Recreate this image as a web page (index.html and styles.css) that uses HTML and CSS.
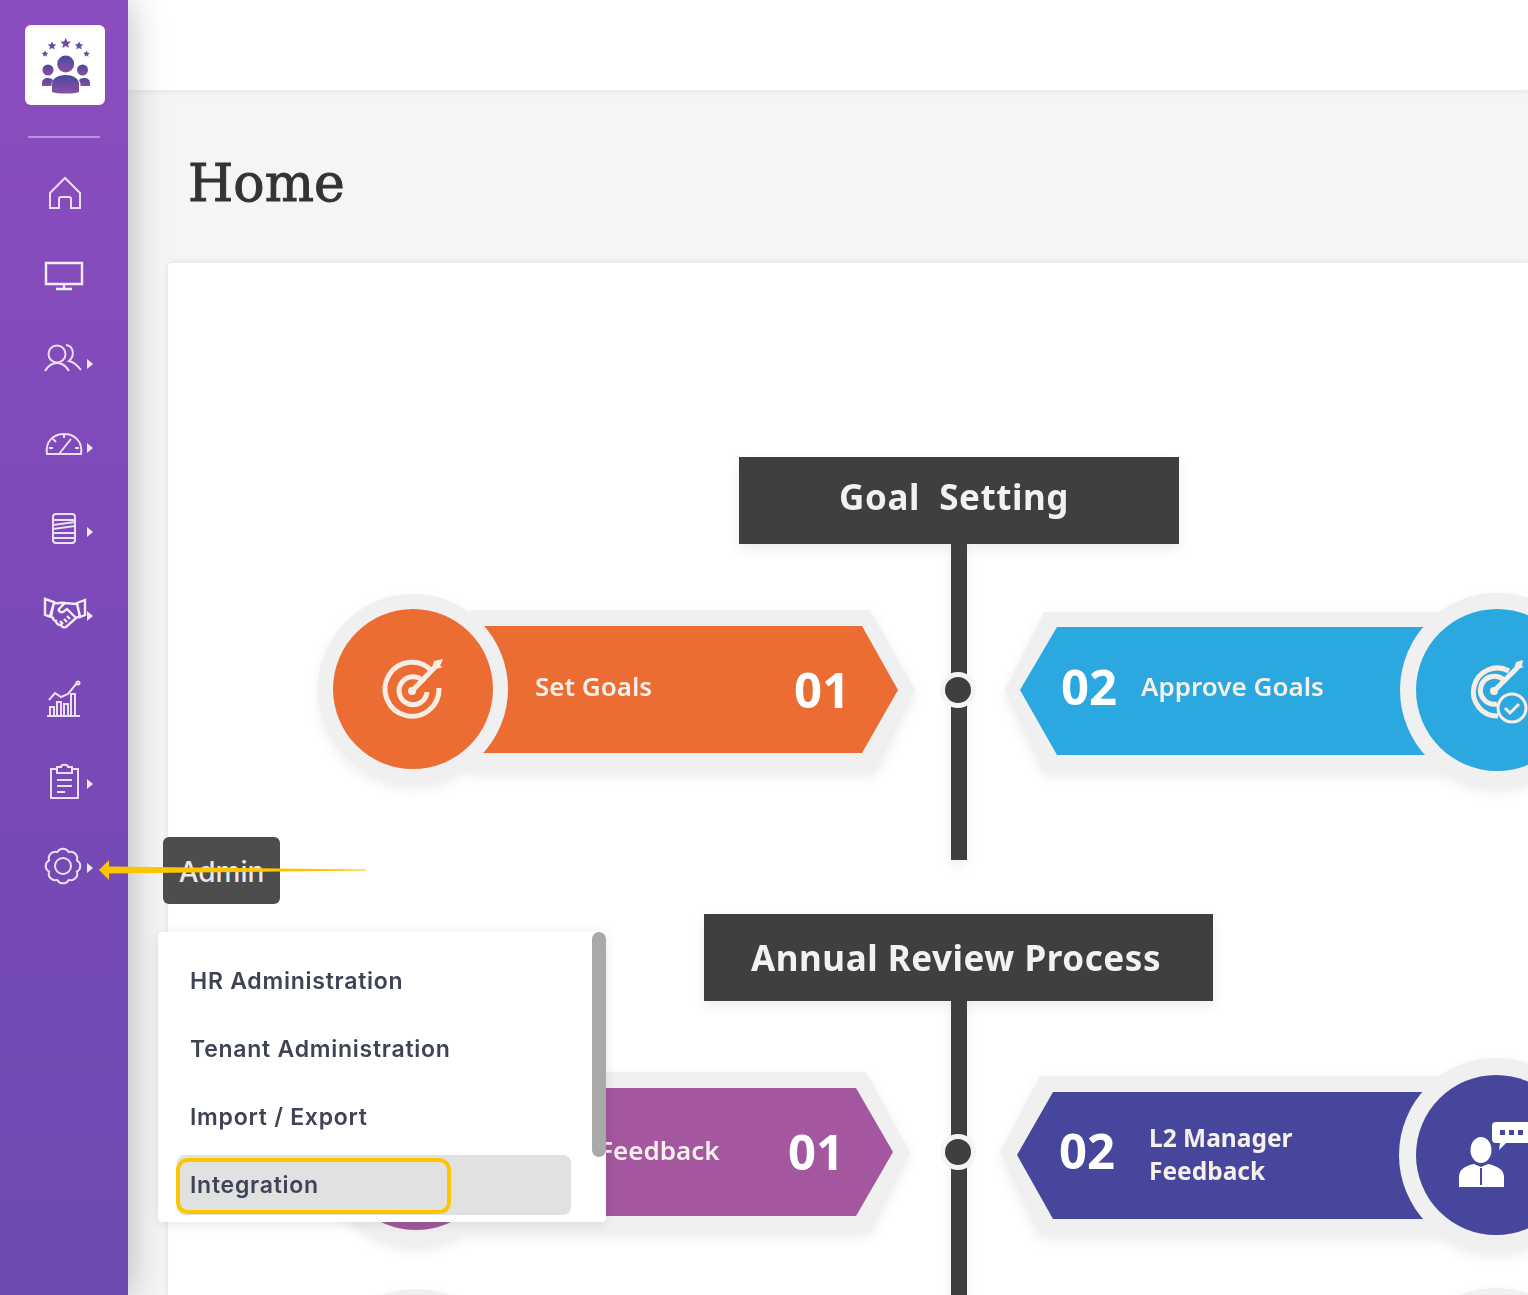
FILE: index.html
```html
<!DOCTYPE html>
<html lang="en">
<head>
  <meta charset="UTF-8" />
  <meta name="viewport" content="width=device-width, initial-scale=1.0" />
  <title>Home</title>
  <link rel="stylesheet" href="styles.css">
</head>
<body>
  <div class="app">
    <aside class="sidebar">
      <div class="logo">
        <svg viewBox="0 0 80 80" width="80" height="80">
          <defs>
            <linearGradient id="logoFill" x1="0" y1="0" x2="0" y2="1">
              <stop offset="0" stop-color="#4a489f" />
              <stop offset="1" stop-color="#8d4f9f" />
            </linearGradient>
          </defs>
          <g fill="url(#logoFill)">
            <path d="M40.7 13l1.6 3.4 3.7.4-2.8 2.5.8 3.7-3.3-1.9-3.3 1.9.8-3.7-2.8-2.5 3.700-.4z" />
            <path d="M27 16.500l1.300 2.800 3 .3-2.300 2 .7 3-2.700-1.500-2.700 1.500.7-3-2.300-2 3-.3z" />
            <path d="M54 16.500l1.300 2.800 3 .3-2.300 2 .7 3-2.700-1.500-2.700 1.500.7-3-2.300-2 3-.3z" />
            <path d="M20 25.500l1 2.100 2.300.3-1.700 1.500.5 2.300-2.100-1.200-2.100 1.200.5-2.300-1.700-1.500 2.300-.3z" />
            <path d="M61.500 25.500l1 2.100 2.300.3-1.700 1.500.5 2.300-2.100-1.200-2.100 1.200.5-2.300-1.700-1.500 2.300-.3z" />
            <circle cx="40.7" cy="39" r="8.5" />
            <circle cx="23" cy="45" r="5.5" />
            <circle cx="57.5" cy="45" r="5.5" />
            <path d="M17 58c0-3 2-5 6-5 2.500 0 4 .8 5 2l-1.500 3.500V61H17z" />
            <path d="M65 58c0-3-2-5-6-5-2.500 0-4 .8-5 2l1.500 3.500V61H65z" />
            <path d="M27 67v-8c0-5 5-9 13.500-9S54 54 54 59v8c-3 1-8 1.500-13.500 1.500S30 68 27 67z" />
          </g>
        </svg>
      </div>
      <div class="divider"></div>
      <nav class="nav">
        <a class="nav-item">
          <svg class="nav-icon" viewBox="0 0 40 40"><path d="M6 35V20L21 5l15 15v15h-9V26a2 2 0 0 0-2-2h-8a2 2 0 0 0-2 2v9z" /></svg>
        </a>
        <a class="nav-item">
          <svg class="nav-icon nav-icon-bold" viewBox="0 0 40 40"><path d="M2 6h36v21H2zM20 27v4M12 32h16" /></svg>
        </a>
        <a class="nav-item">
          <svg class="nav-icon" viewBox="0 0 40 40"><circle cx="13" cy="13" r="8.500" /><path d="M1 30c3-5 6-8 12-8s9 3 12 8M22 4c8 1 9 11 3 16 5 1 9 5 12 9" /></svg>
          <span class="caret"></span>
        </a>
        <a class="nav-item">
          <svg class="nav-icon" viewBox="0 0 40 40"><path d="M3 29C1 16 10 9 20 9s19 7 17 20zM15 29l12-15M20 9v4M9 14l3 3M5 23h4M35 23h-4" /></svg>
          <span class="caret"></span>
        </a>
        <a class="nav-item">
          <svg class="nav-icon" viewBox="0 0 40 40"><rect x="9" y="5" width="22" height="29" rx="3" /><path d="M9 11h22M9 16l22-3M9 20l22-3M9 24h22M9 29h22" /></svg>
          <span class="caret"></span>
        </a>
        <a class="nav-item">
          <svg class="nav-icon nav-icon-bold" viewBox="0 0 40 40"><path d="M1 6l9 3-3 15-6-2zM41 7l-8 3 3 14 5-2zM10 10c4 1 7-1 11 0l12 1 3 12-4 2-10 9c-2 1-4 0-5-2-3 0-5-2-5-4-2 0-3-2-3-3l-3-2zM21 10l-6 6c-1 2 2 4 4 3l4-3 9 9M26 26l-3-3M23 29l-3-3M19 31l-3-3" /></svg>
          <span class="caret"></span>
        </a>
        <a class="nav-item">
          <svg class="nav-icon" viewBox="0 0 40 40"><path d="M3 39h33M6 39v-9h4v9M13 39V25h4v14M20 39V27h4v12M27 39V17h4v22M5 23l6-7 6 4 7-3 9-11" /><circle cx="34" cy="6" r="1.500" /></svg>
        </a>
        <a class="nav-item">
          <svg class="nav-icon" viewBox="0 0 40 40"><path d="M13 8H7v29h27V8h-6M13 6h4c0-3 7-3 7 0h4v6H13zM13 19h15M13 25h15M13 31h8" /></svg>
          <span class="caret"></span>
        </a>
        <a class="nav-item">
          <svg class="nav-icon" viewBox="0 0 40 40"><path d="M32.900 15.300A6.500 6.500 0 0 1 32.900 26.700A6.500 6.500 0 0 1 24.700 34.900A6.500 6.500 0 0 1 13.300 34.900A6.500 6.500 0 0 1 5.100 26.700A6.500 6.500 0 0 1 5.100 15.300A6.500 6.500 0 0 1 13.300 7.100A6.500 6.500 0 0 1 24.700 7.100A6.500 6.500 0 0 1 32.900 15.300z" /><circle cx="19" cy="21" r="8" /></svg>
          <span class="caret"></span>
        </a>
      </nav>
    </aside>

    <main class="main">
      <header class="topbar"></header>
      <div class="content">
        <h1 class="page-title">Home</h1>
        <section class="card">
          <!-- viewBox uses page coordinates so the nodes are easy to place -->
          <svg class="diagram" viewBox="168 263 1360 1032" width="1360" height="1032">
            <g class="halo">
              <path d="M470 610H870L915 690L875 772H470Z" />
              <circle cx="413" cy="689" r="95" />
              <path d="M1510 612H1044L1005 690L1044 772H1510Z" />
              <circle cx="1497" cy="690" r="97" />
              <path d="M470 1072H866L910 1152L870 1232H470Z" />
              <circle cx="416" cy="1150" r="96" />
              <path d="M1510 1076H1040L1000 1152L1040 1235H1510Z" />
              <circle cx="1496" cy="1155" r="97" />
              <circle cx="416" cy="1385" r="96" />
              <circle cx="1496" cy="1385" r="97" />
              <rect x="739" y="457" width="440" height="87" class="head" />
              <rect x="704" y="914" width="509" height="87" class="head" />
              <rect x="951" y="544" width="16" height="316" class="head" />
              <rect x="951" y="1001" width="16" height="294" class="head" />
            </g>

            <text x="954" y="510" class="head-text">Goal&#160; Setting</text>
            <text x="956" y="971" class="head-text">Annual Review Process</text>

            <circle cx="958" cy="690" r="18" class="ring" />
            <circle cx="958" cy="690" r="13" class="dot" />
            <circle cx="958" cy="1152" r="18" class="ring" />
            <circle cx="958" cy="1152" r="13" class="dot" />

            <!-- set goals -->
            <path d="M480 626H862L898 690L862 753H480Z" class="orange" />
            <circle cx="413" cy="689" r="95" class="gap" />
            <circle cx="413" cy="689" r="80" class="orange" />
            <text x="535" y="696" class="label">Set Goals</text>
            <text x="794" y="708" class="num">01</text>
            <g class="glyph">
              <path d="M432 671A27 27 0 1 0 439 688" />
              <path d="M424 682A14 14 0 1 0 427 692" />
              <circle cx="412" cy="691" r="4" class="solid" />
              <path d="M412 691L436 666" />
              <path d="M432 668l2-7 9-2-3 7 3 1-7 2z" class="solid" />
            </g>

            <!-- approve goals -->
            <path d="M1440 627H1057L1020 690L1057 755H1440Z" class="blue" />
            <circle cx="1497" cy="690" r="97" class="gap" />
            <circle cx="1497" cy="690" r="81" class="blue" />
            <text x="1061" y="705" class="num">02</text>
            <text x="1141" y="696" class="label">Approve Goals</text>
            <g class="glyph">
              <path d="M1509 671A24 24 0 1 0 1498 716" />
              <path d="M1504 680A14 14 0 1 0 1497 704" />
              <circle cx="1494" cy="691" r="4" class="solid" />
              <path d="M1494 691L1518 667" />
              <path d="M1514 669l2-7 7-2-1 6 2 1-6 2z" class="solid" />
              <circle cx="1512" cy="708" r="14" class="thin" />
              <path d="M1505 708l5 5 9-9" class="thin" />
            </g>

            <!-- first row of the annual review, mostly under the menu -->
            <path d="M480 1088H856L893 1152L856 1216H480Z" class="purple" />
            <circle cx="416" cy="1150" r="96" class="gap" />
            <circle cx="416" cy="1150" r="80" class="purple" />
            <text x="599" y="1160" class="label">Feedback</text>
            <text x="788" y="1170" class="num">01</text>

            <!-- l2 manager feedback -->
            <path d="M1440 1092H1053L1017 1155L1053 1219H1440Z" class="indigo" />
            <circle cx="1496" cy="1155" r="97" class="gap" />
            <circle cx="1496" cy="1155" r="80" class="indigo" />
            <text x="1059" y="1169" class="num">02</text>
            <text x="1149" y="1147" class="label label-bold">L2 Manager</text>
            <text x="1149" y="1180" class="label label-bold">Feedback</text>
            <g class="solid-glyph">
              <ellipse cx="1481" cy="1150" rx="10.500" ry="13" />
              <path d="M1459 1187v-10c0-7 5-11 15-13l7 3 7-3c10 2 16 6 16 13v10z" />
              <path d="M1492 1126a4 4 0 0 1 4-4h32v21h-22l-7 7 1-7h-4a4 4 0 0 1-4-4z" />
            </g>
            <path d="M1481 1168v17" class="tie" />
            <g class="bubble-dots">
              <rect x="1500" y="1130" width="5" height="5" />
              <rect x="1509" y="1130" width="5" height="5" />
              <rect x="1518" y="1130" width="5" height="5" />
            </g>
          </svg>
        </section>
      </div>
    </main>

    <div class="tooltip">Admin</div>

    <div class="menu">
      <a class="menu-item">HR Administration</a>
      <a class="menu-item">Tenant Administration</a>
      <a class="menu-item">Import / Export</a>
      <a class="menu-item active">Integration<span class="highlight"></span></a>
      <div class="scroll-thumb"></div>
    </div>

    <svg class="pointer" viewBox="0 0 270 24" width="270" height="24">
      <path d="M1 12L11 2V8.500L268 11.500V12.500L11 15.500V22Z" />
    </svg>
  </div>
</body>
</html>
```

FILE: styles.css
```css
body {
  margin: 0;
  background-color: #f5f5f5;
  font-family: "Noto Sans", sans-serif;
  color: #333;
}
a {
  display: block;
}
/* the source picture is a soft upscale, hence the slight blur */
.app {
  position: relative;
  display: flex;
  height: 100vh;
  overflow: hidden;
  filter: blur(0.6px);
}

/* sidebar */
.sidebar {
  position: relative;
  z-index: 2;
  flex: 0 0 128px;
  background: linear-gradient(180deg, #8c4dbe 0%, #7a49b8 50%, #6c4bb0 100%);
  box-shadow: 0 0 36px rgba(0,0,0,0.28);
}
.logo {
  width: 80px;
  height: 80px;
  margin: 25px 0 0 25px;
  background-color: #fff;
  border-radius: 6px;
}
.divider {
  width: 72px;
  height: 2px;
  margin: 31px 0 13px 28px;
  background-color: rgba(255,255,255,0.4);
}
.nav-item {
  display: flex;
  align-items: center;
  gap: 3px;
  height: 84px;
  padding-left: 44px;
}
.nav-icon {
  flex: none;
  width: 40px;
  height: 40px;
  fill: none;
  stroke: #eadff5;
  stroke-width: 2;
  overflow: visible;
}
.nav-icon-bold {
  stroke: #f3ecf9;
  stroke-width: 2.4;
}
.caret {
  width: 0;
  height: 0;
  margin-top: 6px;
  border-left: 6px solid #f1e9f8;
  border-top: 5px solid transparent;
  border-bottom: 5px solid transparent;
}

/* main area */
.main {
  flex: 1;
  min-width: 0;
}
.topbar {
  height: 90px;
  background-color: #fff;
  box-shadow: 0 2px 6px rgba(0,0,0,0.06);
}
.content {
  padding-left: 40px;
}
.page-title {
  height: 173px;
  margin: 0;
  padding: 58px 0 0 20px;
  box-sizing: border-box;
  font-family: "DejaVu Serif", serif;
  font-size: 52px;
  font-weight: 400;
  line-height: 70px;
  color: #333;
  -webkit-text-stroke: 1px #333;
}
.card {
  background-color: #fff;
  border-radius: 4px 0 0 0;
  box-shadow: 0 0 6px rgba(0,0,0,0.1);
}
.diagram {
  display: block;
}

/* diagram */
.halo {
  fill: #f0f0f0;
  filter: drop-shadow(0 5px 6px rgba(0,0,0,0.07));
}
.halo .head {
  fill: #3f3f41;
}
.gap {
  fill: #f0f0f0;
}
.ring {
  fill: #f4f4f4;
}
.dot {
  fill: #3f3f41;
}
.orange { fill: #ec6d33; }
.blue { fill: #2ca8e0; }
.purple { fill: #a4579f; }
.indigo { fill: #46479c; }
.head-text {
  fill: #f2f2f2;
  font-family: "Noto Sans", sans-serif;
  font-size: 35px;
  font-weight: 700;
  letter-spacing: 0.55px;
  text-anchor: middle;
}
.label {
  fill: #f5f0ea;
  font-family: "Noto Sans", sans-serif;
  font-size: 26px;
  font-weight: 600;
}
.label-bold {
  font-weight: 700;
  font-size: 24.5px;
}
.num {
  fill: #fff;
  font-family: "Noto Sans", sans-serif;
  font-size: 49px;
  font-weight: 700;
}
.glyph {
  fill: none;
  stroke: #f8ece4;
  stroke-width: 5;
}
.glyph .solid {
  fill: #f8ece4;
  stroke: none;
}
.glyph .thin {
  stroke-width: 3;
}
.solid-glyph {
  fill: #fff;
}
.tie {
  stroke: #46479c;
  stroke-width: 2;
}
.bubble-dots {
  fill: #46479c;
}

/* overlays */
.tooltip {
  position: absolute;
  z-index: 3;
  left: 163px;
  top: 837px;
  width: 117px;
  height: 67px;
  background-color: #4d4d4d;
  border-radius: 6px;
  color: #e8e8e8;
  font-family: "Inter", sans-serif;
  font-size: 28px;
  font-weight: 500;
  line-height: 70px;
  text-align: center;
}
.menu {
  position: absolute;
  z-index: 3;
  left: 158px;
  top: 932px;
  display: flex;
  flex-direction: column;
  gap: 8px;
  width: 448px;
  height: 290px;
  padding: 19px 35px 7px 19px;
  box-sizing: border-box;
  background-color: #fff;
  border-radius: 4px;
  box-shadow: 0 2px 12px rgba(0,0,0,0.1);
}
.menu-item {
  position: relative;
  height: 60px;
  padding-left: 13px;
  border-radius: 8px;
  font-family: "Inter", sans-serif;
  font-size: 23px;
  font-weight: 600;
  letter-spacing: 0.75px;
  line-height: 60px;
  color: #3f4356;
}
.menu-item.active {
  background-color: #e1e1e1;
}
.highlight {
  position: absolute;
  left: -1px;
  top: 3px;
  width: 275px;
  height: 56px;
  box-sizing: border-box;
  border: 4px solid #fdc500;
  border-radius: 12px;
}
.scroll-thumb {
  position: absolute;
  right: 0;
  top: 0;
  width: 14px;
  height: 225px;
  background-color: #a9a9a9;
  border-radius: 7px;
}
.pointer {
  position: absolute;
  z-index: 4;
  left: 98px;
  top: 858px;
  fill: #fdc500;
}
```
